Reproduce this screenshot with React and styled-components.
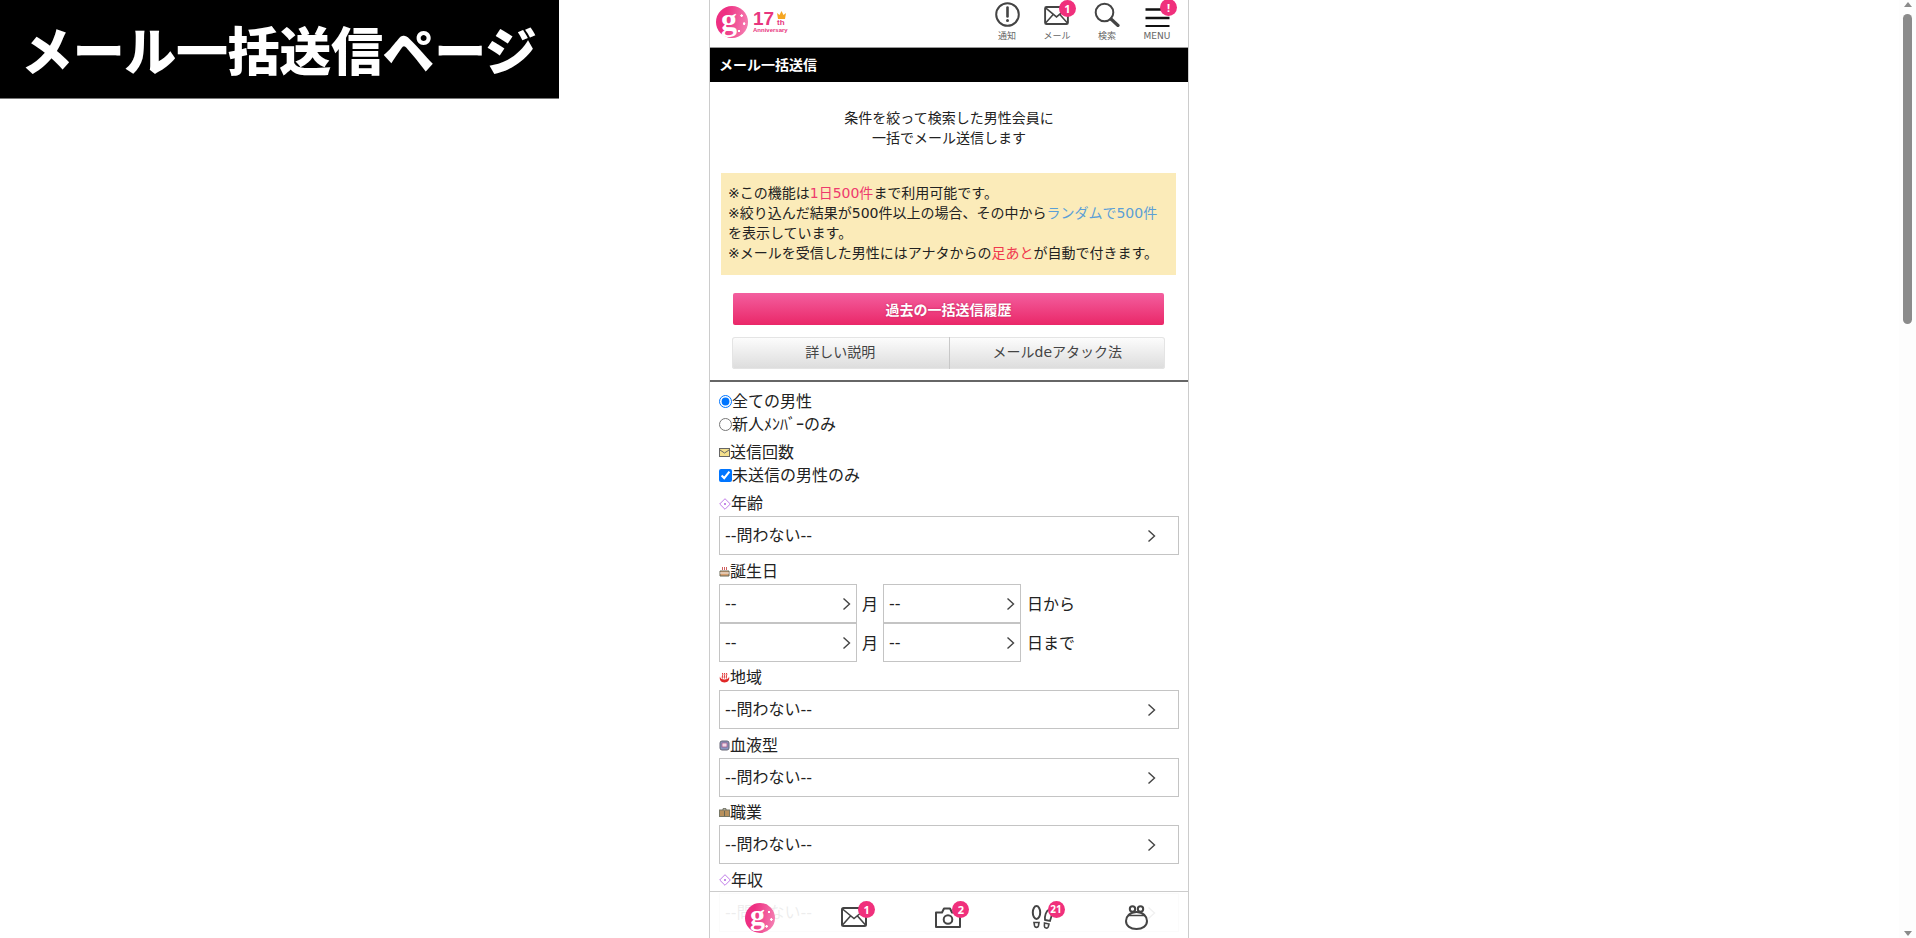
import React from "react";
import styled, { createGlobalStyle } from "styled-components";

const Global = createGlobalStyle`
  html, body { margin: 0; padding: 0; height: 100%; overflow: hidden; background: #fff; }
  #root { height: 100%; }
  * { box-sizing: border-box; }
  body { font-family: "DejaVu Sans", "Noto Sans CJK JP", sans-serif; color: #222; }
`;

const Page = styled.div`
  position: relative;
  display: flex;
  height: 938px;
  overflow: hidden;
`;
const Stage = styled.div`
  flex: 1;
  display: flex;
  justify-content: center;
  padding-right: 1px;
`;
const Banner = styled.div`
  position: absolute;
  left: 0;
  top: 0;
  width: 559px;
  height: 99px;
  padding-left: 21px;
  background: #000;
  border-bottom: 1px solid #777;
  color: #fff;
  font: 900 52px/98px "Noto Sans CJK JP", sans-serif;
  letter-spacing: -.35px;
  white-space: nowrap;
`;
const Scrollbar = styled.div`
  width: 17px;
  height: 938px;
  display: flex;
  flex-direction: column;
  align-items: center;
  padding: 2px 0;
  background: #fdfdfd;
`;
const ScrollArrow = styled.div`
  width: 0;
  height: 0;
  border-left: 4.5px solid transparent;
  border-right: 4.5px solid transparent;
  border-${p => (p.$down ? "top" : "bottom")}: 5px solid #8a8a8a;
`;
const ScrollThumb = styled.div`
  width: 9px;
  height: 310px;
  margin-top: 7px;
  margin-bottom: auto;
  border-radius: 5px;
  background: #8b8b8b;
`;
const Phone = styled.div`
  position: relative;
  width: 480px;
  height: 938px;
  overflow: hidden;
  border-left: 1px solid #ccc;
  border-right: 1px solid #ccc;
  background: #fff;
`;

const Header = styled.header`
  height: 48px;
  display: flex;
  align-items: flex-start;
  padding-right: 6px;
  border-bottom: 1px solid #999;
`;
const LogoMark = styled.div`
  flex: none;
  width: 32px;
  height: 32px;
  margin: 6px 0 0 6px;
  border-radius: 50%;
  background:
    radial-gradient(circle at 80% 30%, #fff 0 1px, transparent 1.5px),
    radial-gradient(circle at 88% 55%, #fff 0 1px, transparent 1.5px),
    radial-gradient(circle at 72% 78%, #fff 0 1px, transparent 1.5px),
    linear-gradient(100deg, #ee2f82 30%, #f586b6 100%);
  color: #fff;
  text-align: left;
  padding-left: 5px;
  font: 700 32px/26px "Liberation Serif", serif;
`;
const Anniv = styled.div`
  position: relative;
  width: 42px;
  height: 30px;
  margin: 9px auto 0 5px;
  color: #e8357e;
  font-family: "Liberation Sans", sans-serif;
  font-weight: 700;
`;
const Seventeen = styled.span`
  position: absolute;
  left: 0;
  top: 0;
  font-size: 19px;
  line-height: 19px;
`;
const Th = styled.span`
  position: absolute;
  left: 24px;
  top: 10px;
  font-size: 8px;
  line-height: 8px;
`;
const AnnivWord = styled.span`
  position: absolute;
  left: 0;
  top: 18px;
  font-size: 6px;
  line-height: 7px;
`;
const Crown = styled.svg`
  position: absolute;
  left: 23px;
  top: 1px;
`;
const HeadItem = styled.div`
  position: relative;
  width: 50px;
  height: 47px;
  display: flex;
  flex-direction: column;
  align-items: center;
`;
const HeadIcon = styled.svg`
  display: block;
  margin-top: 2px;
`;
const MailSlot = styled.div`
  height: 21px;
  margin: 6px 2px 0 0;
`;
const HeadLabel = styled.span`
  margin-top: 3px;
  font-size: 9px;
  line-height: 12px;
  color: #666;
`;
const Badge = styled.span`
  position: absolute;
  left: ${p => p.$x}px;
  top: ${p => p.$y}px;
  width: 17px;
  height: 17px;
  border-radius: 50%;
  background: #f0307c;
  color: #fff;
  text-align: center;
  font: 700 ${p => (p.$small ? 10 : 11)}px/17px "Noto Sans", sans-serif;
`;
const TitleBar = styled.h1`
  margin: 0;
  height: 34px;
  padding-left: 9px;
  background: #000;
  color: #fff;
  font: 700 14px/33px "Noto Sans CJK JP", sans-serif;
`;
const Intro = styled.p`
  margin: 27px 0 0;
  text-align: center;
  font-size: 14px;
  line-height: 19.5px;
`;
const Notice = styled.div`
  margin: 25px 12px 0 11px;
  padding: 11px 7px;
  background: #fbebb9;
  font-size: 14px;
  line-height: 19.9px;
`;
const Mark = styled.span`
  color: ${p => p.$c};
`;
const PinkButton = styled.button`
  display: block;
  width: 431px;
  height: 32px;
  margin: 18px 0 0 23px;
  padding: 0;
  border: 0;
  border-radius: 2px;
  background: linear-gradient(#f35f9f, #ea2768);
  color: #fff;
  font: 700 14px/30px "Noto Sans CJK JP", sans-serif;
  text-shadow: 0 0 2px rgba(160, 20, 70, .6);
`;
const TwinButtons = styled.div`
  display: grid;
  grid-template-columns: 1fr 1fr;
  width: 433px;
  height: 32px;
  margin: 12px 0 0 22px;
  border-radius: 3px;
  overflow: hidden;
  box-shadow: inset 0 0 0 1px #e4e4e4;
  background: linear-gradient(#fdfdfd, #dcdcdc);
`;
const TwinButton = styled.div`
  text-align: center;
  font-size: 14px;
  line-height: 31px;
  color: #444;
  & + & { border-left: 1px solid #c8c8c8; }
`;
const Divider = styled.hr`
  margin: 11px 0 0;
  height: 2px;
  border: 0;
  background: #666;
`;
const Form = styled.form`
  padding: 8.5px 9px 0;
  font-size: 16px;
`;
const Choice = styled.label`
  display: flex;
  align-items: center;
  height: 23px;
  line-height: 23px;
  input { margin: 0; width: 13px; height: 13px; flex: none; }
`;
const FieldLabel = styled.div`
  display: flex;
  align-items: center;
  height: ${p => p.$h || 25}px;
  margin-top: ${p => p.$mt ?? 3.5}px;
  line-height: 23px;
  svg { flex: none; }
`;
const SelectBox = styled.div`
  position: relative;
  height: 39px;
  width: ${p => (p.$small ? "138px" : "100%")};
  flex: none;
  select {
    appearance: none;
    display: block;
    width: 100%;
    height: 100%;
    padding: 0 0 0 5px;
    border: 1px solid #c4c4c4;
    border-radius: 0;
    background: transparent;
    color: #222;
    font: 16px "DejaVu Sans", "Noto Sans CJK JP", sans-serif;
    outline: 0;
  }
`;
const Chevron = styled.svg`
  position: absolute;
  top: 13px;
  right: ${p => (p.$small ? 6 : 23)}px;
  pointer-events: none;
`;
const DateRow = styled.div`
  display: flex;
  align-items: center;
`;
const DateUnit = styled.span`
  width: 26px;
  text-align: center;
`;
const DateEnd = styled.span`
  margin-left: 6px;
`;
const BottomNav = styled.nav`
  position: absolute;
  left: 0;
  right: 0;
  bottom: 0;
  height: 47px;
  display: grid;
  grid-template-columns: repeat(5, 1fr);
  padding: 0 4px 0 3px;
  border-top: 1px solid #ccc;
  background: rgba(255, 255, 255, .92);
`;
const NavItem = styled.div`
  position: relative;
  display: flex;
  justify-content: center;
  align-items: flex-start;
  padding-top: ${p => p.$pt || 14}px;
`;
const NavLogo = styled(LogoMark)`
  width: 30px;
  height: 30px;
  margin: -3px 0 0 0;
  font-size: 30px;
  line-height: 24px;
`;

const stroke = { fill: "none", stroke: "#444", strokeWidth: 2 };

const Mail = ({ w = 26, h = 20 }) => (
  <svg width={w} height={h} viewBox="0 0 26 20" style={{ display: "block" }}>
    <rect x="1" y="1" width="24" height="18" rx="1.5" {...stroke} />
    <path d="M1.5 2l11.5 9.5L24.500 2M1.500 18l8-9M24.500 18l-8-9" {...stroke} strokeWidth="1.600" />
  </svg>
);

const Ic = {
  env: (
    <svg width="11" height="9" viewBox="0 0 11 9">
      <rect x=".5" y=".5" width="10" height="8" fill="#f4e08c" stroke="#666" />
      <path d="M1 2l4.500 3L10 2" fill="none" stroke="#666" />
    </svg>
  ),
  diamond: (
    <svg width="12" height="12" viewBox="0 0 12 12">
      <path d="M6 .7L11.300 6 6 11.300 .7 6z" fill="none" stroke="#c07ce8" />
      <circle cx="6" cy="6" r="1" fill="#b060e0" />
    </svg>
  ),
  cake: (
    <svg width="11" height="11" viewBox="0 0 11 11">
      <path d="M1 5h9v5H1z" fill="#d8a070" stroke="#665" />
      <path d="M1 7h9" stroke="#eee" />
      <path d="M3.500 1v3M5.500 1v3M7.500 1v3" stroke="#d06060" />
    </svg>
  ),
  onsen: (
    <svg width="11" height="11" viewBox="0 0 11 11">
      <path d="M1 4.500c-1 3 1 6 4.500 6S11 7.500 10 4.500c0 2-2 3-4.500 3S1 6.500 1 4.500z" fill="#e02828" />
      <path d="M3.500 6.500c-1-2 1-3.500 0-5.500M5.500 6.500c-1-2 1-3.500 0-5.500M7.500 6.500c-1-2 1-3.500 0-5.500" fill="none" stroke="#e02828" />
    </svg>
  ),
  blood: (
    <svg width="11" height="11" viewBox="0 0 11 11">
      <rect x="1" y="1" width="9" height="9" rx="2" fill="#8896c0" stroke="#667" />
      <rect x="3" y="3" width="5" height="4" fill="#f0d8e8" stroke="#a05080" strokeWidth=".7" />
    </svg>
  ),
  job: (
    <svg width="11" height="9" viewBox="0 0 11 9">
      <rect x=".5" y="2" width="10" height="6.500" fill="#b8905c" stroke="#776" />
      <path d="M4 2V.7h3V2M5.500 3v5" fill="none" stroke="#665" />
    </svg>
  ),
};

const Select = ({ small, text }) => (
  <SelectBox $small={small}>
    <select defaultValue={text}>
      <option>{text}</option>
    </select>
    <Chevron $small={small} width="9" height="14" viewBox="0 0 9 14">
      <path d="M1.500 1.500L7.500 7l-6 5.500" fill="none" stroke="#444" strokeWidth="1.400" />
    </Chevron>
  </SelectBox>
);

const Any = "--問わない--";

export default function App() {
  return (
    <Page>
      <Global />
      <Banner>メール一括送信ページ</Banner>
      <Stage>
        <Phone>
          <Header>
            <LogoMark>g</LogoMark>
            <Anniv>
              <Seventeen>17</Seventeen>
              <Crown width="11" height="9" viewBox="0 0 11 9">
                <path d="M1 3l2.500 2L5.500 1l2 4L10 3 9 9H2z" fill="#f5a623" />
              </Crown>
              <Th>th</Th>
              <AnnivWord>Anniversary</AnnivWord>
            </Anniv>
            <HeadItem>
              <HeadIcon width="25" height="25" viewBox="0 0 25 25">
                <circle cx="12.500" cy="12.500" r="11.300" {...stroke} />
                <path d="M12.500 5.500v9" stroke="#444" strokeWidth="2.600" strokeLinecap="round" />
                <circle cx="12.500" cy="18.500" r="1.500" fill="#444" />
              </HeadIcon>
              <HeadLabel>通知</HeadLabel>
            </HeadItem>
            <HeadItem>
              <MailSlot>
                <Mail w={25} h={19} />
              </MailSlot>
              <HeadLabel>メール</HeadLabel>
              <Badge $x={27} $y={0}>1</Badge>
            </HeadItem>
            <HeadItem>
              <HeadIcon width="26" height="25" viewBox="0 0 26 25">
                <circle cx="10.500" cy="10.500" r="8.800" {...stroke} />
                <path d="M17 17l7 6.500" stroke="#444" strokeWidth="3.200" strokeLinecap="round" />
              </HeadIcon>
              <HeadLabel>検索</HeadLabel>
            </HeadItem>
            <HeadItem>
              <HeadIcon width="25" height="25" viewBox="0 0 25 25">
                <path d="M.5 7.500h24M.5 16h24M.5 24.300h24" stroke="#111" strokeWidth="2.600" />
              </HeadIcon>
              <HeadLabel>MENU</HeadLabel>
              <Badge $x={28} $y={-1}>!</Badge>
            </HeadItem>
          </Header>
          <TitleBar>メール一括送信</TitleBar>
          <Intro>
            条件を絞って検索した男性会員に<br />一括でメール送信します
          </Intro>
          <Notice>
            ※この機能は<Mark $c="#ee3a6d">1日500件</Mark>まで利用可能です。<br />
            ※絞り込んだ結果が500件以上の場合、その中から<Mark $c="#5b9fd6">ランダムで500件</Mark>を表示しています。<br />
            ※メールを受信した男性にはアナタからの<Mark $c="#f0384e">足あと</Mark>が自動で付きます。
          </Notice>
          <PinkButton type="button">過去の一括送信履歴</PinkButton>
          <TwinButtons>
            <TwinButton>詳しい説明</TwinButton>
            <TwinButton>メールdeアタック法</TwinButton>
          </TwinButtons>
          <Divider />
          <Form>
            <Choice><input type="radio" name="who" defaultChecked />全ての男性</Choice>
            <Choice><input type="radio" name="who" />新人ﾒﾝﾊﾞｰのみ</Choice>
            <FieldLabel $h={23} $mt={5}>{Ic.env}送信回数</FieldLabel>
            <Choice><input type="checkbox" defaultChecked />未送信の男性のみ</Choice>
            <FieldLabel $mt={4}>{Ic.diamond}年齢</FieldLabel>
            <Select text={Any} />
            <FieldLabel>{Ic.cake}誕生日</FieldLabel>
            <DateRow>
              <Select small text="--" /><DateUnit>月</DateUnit><Select small text="--" /><DateEnd>日から</DateEnd>
            </DateRow>
            <DateRow>
              <Select small text="--" /><DateUnit>月</DateUnit><Select small text="--" /><DateEnd>日まで</DateEnd>
            </DateRow>
            <FieldLabel>{Ic.onsen}地域</FieldLabel>
            <Select text={Any} />
            <FieldLabel>{Ic.blood}血液型</FieldLabel>
            <Select text={Any} />
            <FieldLabel>{Ic.job}職業</FieldLabel>
            <Select text={Any} />
            <FieldLabel>{Ic.diamond}年収</FieldLabel>
            <Select text={Any} />
          </Form>
          <BottomNav>
            <NavItem><NavLogo>g</NavLogo></NavItem>
            <NavItem $pt={15}>
              <Mail />
              <Badge $x={51} $y={9}>1</Badge>
            </NavItem>
            <NavItem $pt={15}>
              <svg width="26" height="21" viewBox="0 0 26 21">
                <path d="M1 5.500h6l2-4h6l2 4h8v14.500H1z" {...stroke} strokeLinejoin="round" />
                <circle cx="13" cy="12.500" r="4.300" {...stroke} />
              </svg>
              <Badge $x={51} $y={9}>2</Badge>
            </NavItem>
            <NavItem $pt={13}>
              <svg width="23" height="24" viewBox="0 0 23 24">
                <ellipse cx="5.500" cy="7.500" rx="3.700" ry="6.500" {...stroke} />
                <path d="M3 17.500h5l-.6 3.500a2 2 0 0 1-3.800 0z" {...stroke} strokeWidth="1.600" />
                <path d="M14 15c-.5-4 1-9 4-10.500 3-1 4 2 3 5l-2 6.500z" {...stroke} strokeWidth="1.800" />
                <path d="M13.500 18l4.500 1-.8 3a2 2 0 0 1-3.800-.8z" {...stroke} strokeWidth="1.600" />
              </svg>
              <Badge $x={52} $y={9} $small>21</Badge>
            </NavItem>
            <NavItem $pt={13}>
              <svg width="23" height="25" viewBox="0 0 23 25">
                <circle cx="7.500" cy="4" r="2.700" {...stroke} />
                <circle cx="15.500" cy="4" r="2.700" {...stroke} />
                <path d="M11.500 7C5 7 1 11.500 1 16c0 5 4.500 8 10.500 8S22 21 22 16c0-4.500-4-9-10.500-9z" {...stroke} />
                <path d="M3 10.500h17" {...stroke} strokeWidth="1.500" />
              </svg>
            </NavItem>
          </BottomNav>
        </Phone>
      </Stage>
      <Scrollbar>
        <ScrollArrow />
        <ScrollThumb />
        <ScrollArrow $down />
      </Scrollbar>
    </Page>
  );
}
